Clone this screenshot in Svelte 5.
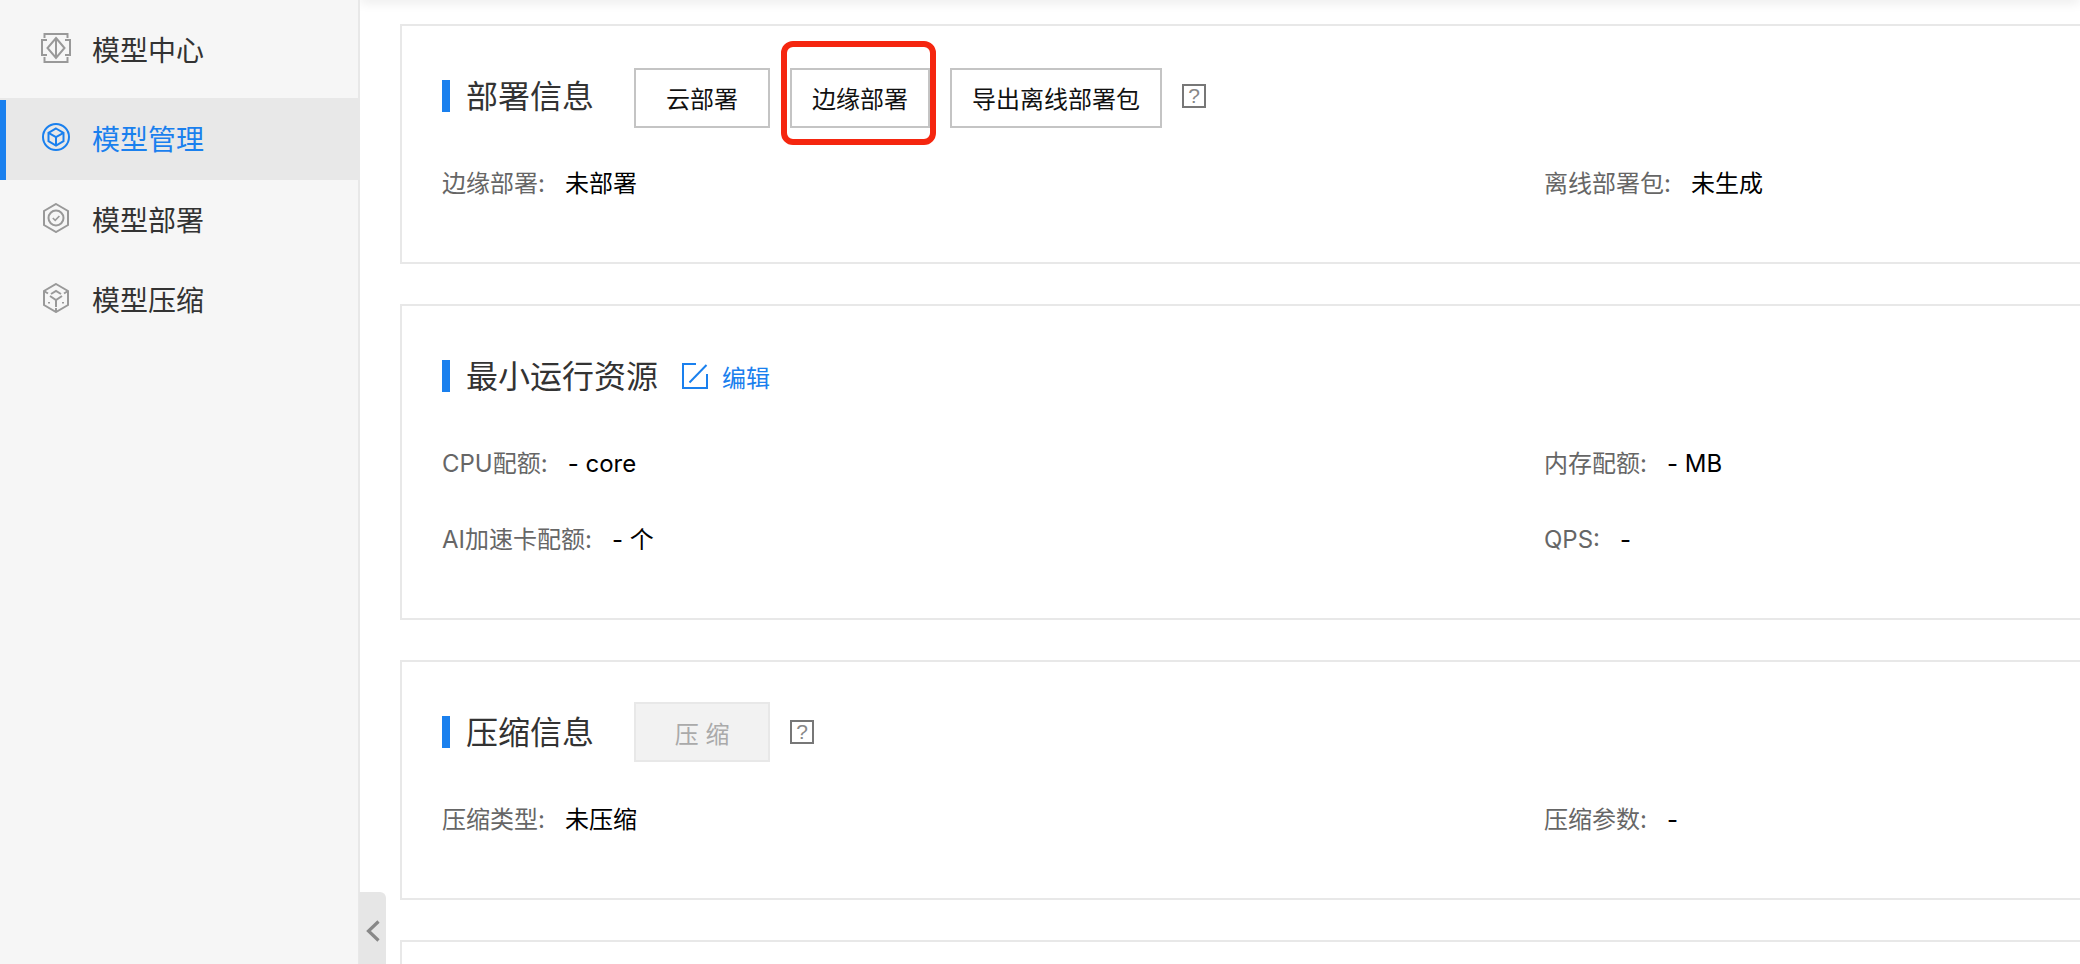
<script>
  const menu = [
    { label: '模型中心', icon: 'center' },
    { label: '模型管理', icon: 'manage', active: true },
    { label: '模型部署', icon: 'deploy' },
    { label: '模型压缩', icon: 'compress' }
  ]
</script>

{#snippet help()}
  <span class="help">?</span>
{/snippet}

{#snippet field(label, value)}
  <div class="field"><span class="label">{label}:</span><span class="value">{value}</span></div>
{/snippet}

<div class="page">
  <aside class="sidebar">
    <nav>
      {#each menu as item}
        <div class="item" class:active={item.active}>
          <svg class="icon" viewBox="0 0 30 30" fill="none" stroke="currentColor" stroke-width="2">
            {#if item.icon === 'center'}
              <path d="M3.500 5V1H26.500V5M3.500 24V29H26.500V24" />
              <path d="M6 7H1V22H6M24 7H29V22H24" />
              <path d="M15 5L23.500 15L15 25L6.500 15Z" />
              <path d="M15 5V25" />
            {:else if item.icon === 'manage'}
              <circle cx="15" cy="15" r="13" />
              <path d="M15 6.500L22.500 10.800V19.200L15 23.500L7.500 19.200V10.800Z" />
              <path d="M7.500 10.800L15 15L22.500 10.800M15 15V23.500" />
            {:else if item.icon === 'deploy'}
              <path d="M15 1L27 8V22L15 29L3 22V8Z" />
              <circle cx="15" cy="15" r="7.500" />
              <path d="M11.800 15L14.200 17.300L18.400 13" stroke-width="1.600" />
            {:else}
              <path d="M15 1L27 8V22L15 29L3 22V8Z" />
              <path d="M10 11L15 8L20 11M3 8L7 10.500M27 8L23 10.500M15 29V25" />
              <path d="M9 13L15 17L21 13M15 17V24" />
              <path d="M8 19V20.500M22 19V20.500" />
            {/if}
          </svg>
          <span>{item.label}</span>
        </div>
      {/each}
    </nav>
  </aside>

  <button class="collapse" aria-label="收起">
    <svg viewBox="0 0 14 22" fill="none" stroke="#888" stroke-width="3.200"><path d="M12.500 1.500L2.500 11L12.500 20.500" /></svg>
  </button>

  <main class="main">
    <section class="card">
      <div class="head raised">
        <h2><span>部署信息</span></h2>
        <button class="btn">云部署</button>
        <button class="btn">边缘部署</button>
        <button class="btn">导出离线部署包</button>
        {@render help()}
      </div>
      <div class="fields">
        {@render field('边缘部署', '未部署')}
        {@render field('离线部署包', '未生成')}
      </div>
      <div class="mark"></div>
    </section>

    <section class="card">
      <div class="head">
        <h2><span>最小运行资源</span></h2>
        <a class="edit" href="#edit">
          <svg viewBox="0 0 26 26" fill="none" stroke="currentColor" stroke-width="2">
            <path d="M14 1H1V25H25V11" />
            <path d="M7.500 19.500L24.500 2" />
          </svg>
          编辑
        </a>
      </div>
      <div class="fields">
        {@render field('CPU配额', '- core')}
        {@render field('内存配额', '- MB')}
        {@render field('AI加速卡配额', '- 个')}
        {@render field('QPS', '-')}
      </div>
    </section>

    <section class="card">
      <div class="head">
        <h2><span>压缩信息</span></h2>
        <button class="btn disabled" disabled>压 缩</button>
        {@render help()}
      </div>
      <div class="fields">
        {@render field('压缩类型', '未压缩')}
        {@render field('压缩参数', '-')}
      </div>
    </section>

    <section class="card"></section>
  </main>
</div>

<style>
  :global(body) {
    overflow: hidden;
    font-family: Inter, 'Noto Sans CJK SC', sans-serif;
  }

  .page {
    display: flex;
    position: relative;
    height: 964px;
    overflow: hidden;
    background: #fff;
  }

  .sidebar {
    flex: 0 0 358px;
    padding-top: 10px;
    background: #f6f6f6;
    border-right: 2px solid #e8e8e8;
  }

  .item {
    position: relative;
    display: flex;
    align-items: center;
    gap: 21px;
    height: 80px;
    padding-left: 41px;
    font-size: 28px;
    color: #333;
  }

  .item span {
    margin-top: -2px;
  }

  .item:first-child {
    margin-bottom: 8px;
  }

  .item.active {
    height: 82px;
    margin-right: -2px;
    background: #e8e8e8;
    color: #1a80ee;
  }

  .item.active::before {
    content: '';
    position: absolute;
    left: 0;
    top: 2px;
    bottom: 0;
    width: 6px;
    background: #1a80ee;
  }

  .icon {
    flex: none;
    width: 30px;
    height: 30px;
    margin-top: -4px;
    color: #999;
  }

  .active .icon {
    color: #1a80ee;
  }

  .collapse {
    position: absolute;
    left: 359px;
    top: 892px;
    width: 27px;
    height: 72px;
    display: flex;
    align-items: center;
    justify-content: center;
    padding: 6px 0 0;
    border: 0;
    border-top-right-radius: 6px;
    background: #e6e6e6;
  }

  .collapse svg {
    width: 14px;
    height: 22px;
  }

  .main {
    position: relative;
    flex: 1;
    padding: 24px 0 0 40px;
    overflow: hidden;
  }

  .main::before {
    content: '';
    position: absolute;
    left: 0;
    right: 0;
    top: -8px;
    height: 8px;
    box-shadow: 0 2px 12px rgba(0, 0, 0, 0.1);
  }

  .card {
    position: relative;
    width: 1800px;
    box-sizing: border-box;
    margin-bottom: 40px;
    padding: 54px 40px 62px;
    border: 2px solid #e8e8e8;
  }

  .head {
    display: flex;
    align-items: center;
    height: 32px;
    margin-bottom: 56px;
  }

  .head.raised .btn {
    margin-top: 3px;
  }

  h2 {
    display: flex;
    align-items: center;
    margin: 0 40px 0 0;
    font-size: 32px;
    font-weight: 400;
    line-height: 32px;
    color: #333;
  }

  h2 span {
    margin-top: 2px;
  }

  h2::before {
    content: '';
    width: 8px;
    height: 32px;
    margin-right: 16px;
    background: #1a80ee;
  }

  .btn {
    flex: none;
    box-sizing: border-box;
    min-width: 136px;
    height: 60px;
    margin-right: 20px;
    padding: 0 20px;
    border: 2px solid #c4c4c4;
    background: #fff;
    font: inherit;
    font-size: 24px;
    color: #111;
  }

  .btn.disabled {
    background: #f2f2f2;
    border-color: #e8e8e8;
    color: #aaa;
  }

  .help {
    box-sizing: border-box;
    width: 24px;
    height: 24px;
    border: 2px solid #777;
    font-family: 'Liberation Sans', sans-serif;
    font-size: 21px;
    line-height: 20px;
    text-align: center;
    color: #888;
  }

  .edit {
    display: flex;
    align-items: center;
    gap: 14px;
    margin-left: -16px;
    font-size: 24px;
    color: #1a80ee;
    text-decoration: none;
  }

  .edit svg {
    width: 26px;
    height: 26px;
  }

  .fields {
    display: grid;
    grid-template-columns: 1102px 1fr;
    row-gap: 44px;
  }

  .field {
    font-size: 24px;
    line-height: 32px;
    white-space: nowrap;
  }

  .label {
    margin-right: 20px;
    color: #666;
  }

  .value {
    color: #000;
  }

  .mark {
    position: absolute;
    left: 379px;
    top: 15px;
    width: 143px;
    height: 92px;
    border: 6px solid #f5260f;
    border-radius: 12px;
    pointer-events: none;
  }
</style>
